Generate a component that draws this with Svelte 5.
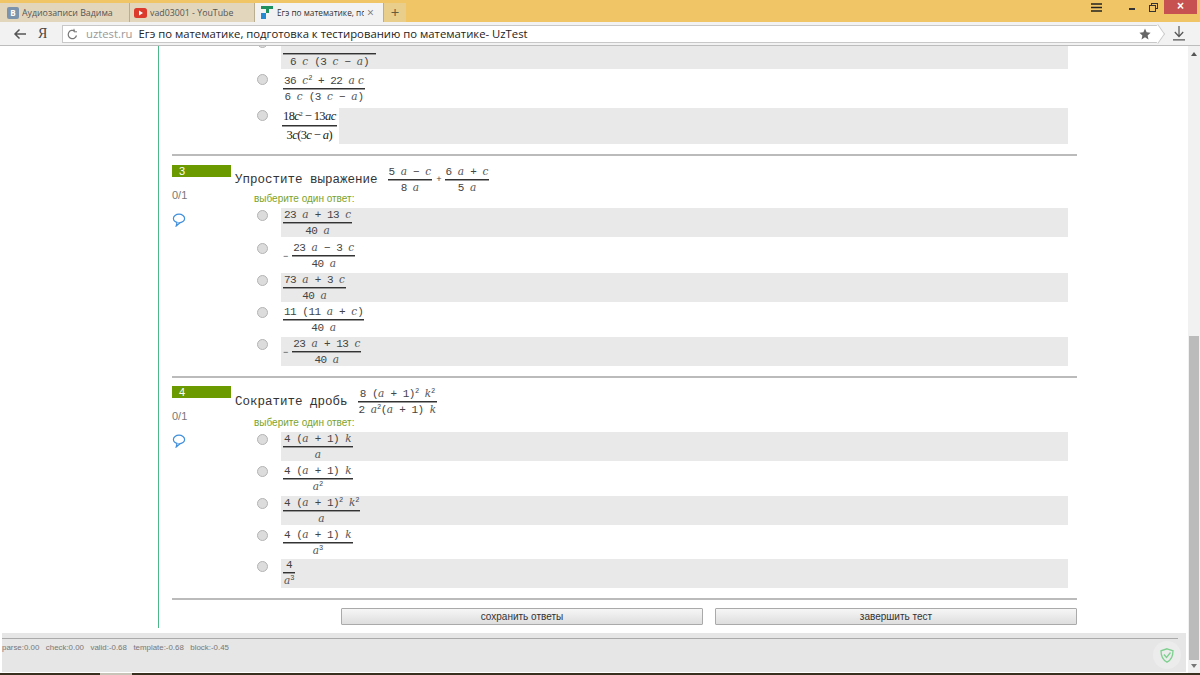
<script>
  const blocks = [
    {
      clipped: true,
      rows: [
        { num: '', den: '6 <i>c</i> (3 <i>c</i> − <i>a</i>)', shade: true, lineWidth: 93, indent: 10 },
        { num: '36 <i>c</i><sup>2</sup> + 22 <i>a c</i>', den: '6 <i>c</i> (3 <i>c</i> − <i>a</i>)', tall: true },
        { num: '18<i>c</i><sup>2</sup> − 13<i>ac</i>', den: '3<i>c</i>(3<i>c</i> − <i>a</i>)', shade: true, serif: true }
      ]
    },
    {
      n: 3,
      title: 'Упростите выражение',
      expr: [
        { num: '5 <i>a</i> − <i>c</i>', den: '8 <i>a</i>' },
        { num: '6 <i>a</i> + <i>c</i>', den: '5 <i>a</i>' }
      ],
      rows: [
        { num: '23 <i>a</i> + 13 <i>c</i>', den: '40 <i>a</i>', shade: true },
        { minus: true, num: '23 <i>a</i> − 3 <i>c</i>', den: '40 <i>a</i>' },
        { num: '73 <i>a</i> + 3 <i>c</i>', den: '40 <i>a</i>', shade: true },
        { num: '11 (11 <i>a</i> + <i>c</i>)', den: '40 <i>a</i>' },
        { minus: true, num: '23 <i>a</i> + 13 <i>c</i>', den: '40 <i>a</i>', shade: true }
      ]
    },
    {
      n: 4,
      title: 'Сократите дробь',
      expr: [
        { num: '8 (<i>a</i> + 1)<sup>2</sup> <i>k</i><sup>2</sup>', den: '2 <i>a</i><sup>2</sup>(<i>a</i> + 1) <i>k</i>' }
      ],
      rows: [
        { num: '4 (<i>a</i> + 1) <i>k</i>', den: '<i>a</i>', shade: true },
        { num: '4 (<i>a</i> + 1) <i>k</i>', den: '<i>a</i><sup>2</sup>' },
        { num: '4 (<i>a</i> + 1)<sup>2</sup> <i>k</i><sup>2</sup>', den: '<i>a</i>', shade: true },
        { num: '4 (<i>a</i> + 1) <i>k</i>', den: '<i>a</i><sup>3</sup>' },
        { num: '4', den: '<i>a</i><sup>3</sup>', shade: true }
      ]
    }
  ];
</script>

{#snippet frac(f)}
  <span class="frac" class:serif={f.serif}>
    <span class="num" style={f.indent ? `padding-left:${f.indent}px` : ''}>{@html f.num}</span>
    <span class="bar" style={f.lineWidth ? `width:${f.lineWidth}px` : ''}></span>
    <span class="den">{@html f.den}</span>
  </span>
{/snippet}

{#snippet options(rows)}
  <div class="options">
    {#each rows as row}
      <div class="option" class:tall={row.tall} class:image={row.serif}>
        <input type="radio" disabled />
        <div class="answer" class:shade={row.shade}>
          <span class="formula" class:paper={row.serif}>
            {#if row.minus}<span class="minus">−</span>{/if}
            {@render frac(row)}
          </span>
        </div>
      </div>
    {/each}
  </div>
{/snippet}

<div class="window">
  <div class="tabbar">
    <div class="tab">
      <span class="vk">В</span>
      <span class="tab-title">Аудиозаписи Вадима</span>
    </div>
    <div class="tab">
      <svg width="13" height="10" viewBox="0 0 13 10">
        <rect width="13" height="10" rx="2.5" fill="#dc3a2c" />
        <path d="M5 2.6v4.8L9 5z" fill="#fff" />
      </svg>
      <span class="tab-title">vad03001 - YouTube</span>
    </div>
    <div class="tab active">
      <svg width="13" height="13" viewBox="0 0 13 13">
        <rect x="0" y="0" width="12" height="3" fill="#1e8f5e" />
        <rect x="5" y="3" width="3" height="4" fill="#1e8f5e" />
        <rect x="0" y="7" width="5" height="6" fill="#2489d0" />
      </svg>
      <span class="tab-title">Егэ по математике, по</span>
      <span class="tab-close">×</span>
    </div>
    <div class="newtab">+</div>
    <div class="winctl">
      <svg class="menu" width="12" height="9" viewBox="0 0 12 9">
        <path d="M0 1h11M0 4.5h11M0 8h11" stroke="#222" stroke-width="1.4" />
      </svg>
      <span class="min"></span>
      <svg class="restore" width="9" height="9" viewBox="0 0 9 9" fill="none" stroke="#333">
        <rect x="2.5" y="0.5" width="6" height="5" />
        <rect x="0.5" y="2.5" width="6" height="6" fill="#f0c566" />
      </svg>
      <span class="close">×</span>
    </div>
  </div>

  <div class="toolbar">
    <svg class="back" width="14" height="12" viewBox="0 0 14 12" fill="none" stroke="#555" stroke-width="1.5">
      <path d="M13 6H2M6.5 1.5 2 6l4.5 4.5" />
    </svg>
    <span class="ya">Я</span>
    <div class="omnibox">
      <svg width="11" height="12" viewBox="0 0 11 12" fill="none" stroke="#777" stroke-width="1.2">
        <path d="M9.5 7.5a4.2 4.2 0 1 1-1.6-4.4" />
        <path d="M7 0.8v3h3" stroke-width="1" />
      </svg>
      <span class="host">uztest.ru</span>
      <span class="page-title">Егэ по математике, подготовка к тестированию по математике- UzTest</span>
      <svg class="star" width="12" height="12" viewBox="0 0 12 12">
        <path d="M6 .6 7.6 4.300l4 .4-3 2.700.9 4L6 9.300 2.500 11.400l.9-4-3-2.700 4-.4z" fill="#666" />
      </svg>
    </div>
    <svg class="download" width="12" height="15" viewBox="0 0 12 15" fill="none" stroke="#555" stroke-width="1.2">
      <path d="M6 0v10M1.800 6 6 10.500 10.200 6M0 13.800h12" />
    </svg>
  </div>

  <div class="viewport">
    <div class="page">
      <main class="test">
        {#each blocks as block}
          <section class="question" class:clipped={block.clipped} class:fourth={block.n === 4}>
            <div class="side">
              {#if block.n}
                <div class="badge">{block.n}</div>
                <div class="score">0/1</div>
                <svg class="comment" width="14" height="14" viewBox="0 0 14 14" fill="none" stroke="#3f8fdc" stroke-width="1.2">
                  <ellipse cx="7" cy="5.500" rx="5.600" ry="4.300" />
                  <path d="M5 9.500 4.200 13 8 9.700" fill="#fff" />
                </svg>
              {/if}
            </div>
            <div class="body">
              {#if block.n}
                <div class="head">
                  <span class="title">{block.title}</span>
                  {#each block.expr as f, j}
                    {#if j > 0}<span class="plus">+</span>{/if}
                    {@render frac(f)}
                  {/each}
                </div>
                <div class="hint">выберите один ответ:</div>
              {/if}
              {@render options(block.rows)}
            </div>
          </section>
          <hr />
        {/each}
        <div class="actions">
          <button>сохранить ответы</button>
          <button>завершить тест</button>
        </div>
      </main>
      <footer class="debug">
        <div class="debug-line"></div>
        <div class="stats">
          <span>parse:0.00</span>
          <span>check:0.00</span>
          <span>valid:-0.68</span>
          <span>template:-0.68</span>
          <span>block:-0.45</span>
        </div>
        <div class="guard">
          <svg width="14" height="15" viewBox="0 0 14 15" fill="none" stroke="#7ed08f" stroke-width="1.300">
            <path d="M7 .8 13 2.800c0 6-1.500 9.200-6 11.400C2.500 12 1 8.800 1 2.800z" />
            <path d="M4 6.500 6.500 9.500 10.500 4.500" />
          </svg>
        </div>
      </footer>
    </div>
    <div class="scrollbar">
      <span class="arrow up"></span>
      <div class="track"></div>
      <div class="thumb"></div>
      <span class="arrow down"></span>
    </div>
  </div>

  <div class="taskbar">
    <span class="task"></span>
  </div>
</div>

<style>
  :global(body) {
    overflow: hidden;
    background: #fff;
  }

  .window {
    width: 1200px;
    height: 675px;
    display: flex;
    flex-direction: column;
    overflow: hidden;
    font-family: "Liberation Sans", Arial, sans-serif;
  }

  /* Browser chrome */
  .tabbar {
    height: 22px;
    flex-shrink: 0;
    display: flex;
    align-items: flex-end;
    background: #f0c566;
    font-family: "Open Sans", "Noto Sans", sans-serif;
    font-size: 8.800px;
  }

  .tab {
    width: 130px;
    height: 19px;
    display: flex;
    align-items: center;
    gap: 3px;
    padding-left: 4px;
    box-sizing: border-box;
    background: #e2d7bd;
    border-right: 1px solid #b9ad92;
    color: #555;
    overflow: hidden;
    white-space: nowrap;
  }

  .tab:nth-child(2) {
    width: 125px;
  }

  .tab.active {
    width: 129px;
    background: #f2f2f2;
    color: #333;
    padding-left: 6px;
    font-size: 8.300px;
  }

  .tab-title {
    flex: 1;
    overflow: hidden;
  }

  .tab-close {
    width: 9px;
    margin-right: 7px;
    line-height: 14px;
    font-size: 12px;
    color: #777;
  }

  .vk {
    width: 12px;
    height: 12px;
    margin-left: 3px;
    background: #7b93ad;
    color: #fff;
    border-radius: 2px;
    font-size: 8px;
    font-weight: 700;
    line-height: 12px;
    text-align: center;
    flex-shrink: 0;
  }

  .newtab {
    width: 22px;
    height: 19px;
    background: #e9cd8a;
    color: #665a3a;
    font-size: 15px;
    line-height: 18px;
    text-align: center;
  }

  .winctl {
    margin-left: auto;
    align-self: flex-start;
    display: flex;
    align-items: center;
    height: 14px;
    padding-right: 3px;
  }

  .menu {
    margin-right: 26px;
    margin-top: 1px;
  }

  .min {
    width: 6px;
    height: 2px;
    background: #333;
    margin-right: 14px;
    margin-top: 3px;
  }

  .restore {
    margin-right: 6px;
  }

  .close {
    width: 33px;
    height: 14px;
    background: #c75050;
    color: #fff;
    font-family: "Liberation Sans", Arial, sans-serif;
    font-size: 12px;
    font-weight: 700;
    line-height: 13px;
    text-align: center;
  }

  .toolbar {
    height: 24px;
    flex-shrink: 0;
    display: flex;
    align-items: center;
    background: #f2f2f2;
    border-bottom: 1px solid #bdbdbd;
    box-sizing: border-box;
  }

  .back {
    margin-left: 13px;
  }

  .ya {
    margin-left: 11px;
    width: 24px;
    font-family: "Liberation Serif", serif;
    font-size: 14px;
    color: #444;
  }

  .omnibox {
    position: relative;
    width: 1097px;
    height: 18px;
    display: flex;
    align-items: center;
    box-sizing: border-box;
    padding-left: 4px;
    background: #fff;
    border: 1px solid #c8c8c8;
    border-right: none;
    font-family: "Open Sans", "Noto Sans", sans-serif;
    font-size: 11.300px;
    white-space: nowrap;
  }

  .omnibox::after {
    content: '';
    position: absolute;
    right: -5px;
    top: 2px;
    width: 11px;
    height: 11px;
    background: #fff;
    border-top: 1px solid #c8c8c8;
    border-right: 1px solid #c8c8c8;
    transform: rotate(45deg) skew(10deg, 10deg);
  }

  .host {
    margin-left: 8px;
    color: #999;
  }

  .page-title {
    margin-left: 6px;
    color: #222;
  }

  .star {
    margin-left: auto;
    margin-right: 8px;
  }

  .download {
    margin-left: 14px;
  }

  /* Page */
  .viewport {
    flex: 1;
    min-height: 0;
    display: flex;
    overflow: hidden;
  }

  .page {
    flex: 1;
    min-width: 0;
    display: flex;
    flex-direction: column;
    overflow: hidden;
  }

  .test {
    width: 920px;
    height: 582px;
    flex-shrink: 0;
    box-sizing: border-box;
    margin-left: 158px;
    padding-left: 13px;
    border-left: 1px solid #4cb88a;
    overflow: hidden;
  }

  .question {
    display: grid;
    grid-template-columns: 59px 1fr;
    column-gap: 4px;
    padding-top: 9px;
  }

  .question.clipped {
    margin-top: -6px;
    padding-top: 0;
  }

  .question.fourth {
    padding-top: 8px;
  }

  .badge {
    height: 12px;
    padding-left: 7px;
    background: #6a9a00;
    color: #fff;
    font-size: 11px;
    line-height: 12px;
  }

  .score {
    margin-top: 12px;
    color: #777;
    font-size: 11px;
    line-height: 13px;
  }

  .comment {
    display: block;
    margin-top: 11px;
  }

  .body {
    min-width: 0;
  }

  .head {
    height: 29px;
    display: flex;
    align-items: center;
  }

  .fourth .head {
    height: 32px;
  }

  .title {
    font-family: "Liberation Mono", monospace;
    font-size: 12.500px;
    color: #333;
    margin-right: 10px;
  }

  .plus {
    font-family: "Liberation Mono", monospace;
    font-size: 9px;
    color: #444;
    margin: 0 3px 0 4px;
  }

  .hint {
    margin-left: 19px;
    color: #7ba32c;
    font-size: 10px;
    line-height: 10px;
  }

  .options {
    margin-top: 4px;
    display: flex;
    flex-direction: column;
    gap: 3.200px;
  }

  .fourth .options {
    gap: 2.800px;
  }

  .clipped .options {
    margin-top: 0;
  }

  .option {
    display: flex;
    align-items: flex-start;
    margin-right: 10px;
  }

  input[type="radio"] {
    appearance: none;
    width: 11px;
    height: 11px;
    margin: 2px 13px 0 22px;
    flex-shrink: 0;
    border-radius: 50%;
    border: 1px solid #b4b4b4;
    box-sizing: border-box;
    background: #dcdcdc;
  }

  .clipped .option:first-child input {
    margin-top: -3px;
  }

  .answer {
    flex: 1;
    height: 29px;
    display: flex;
    align-items: flex-start;
  }

  .tall .answer {
    height: 33px;
    padding-top: 2px;
    box-sizing: border-box;
  }

  .image .answer {
    height: 36px;
  }

  .answer.shade {
    background: #e9e9e9;
  }

  .formula {
    display: inline-flex;
    align-items: center;
    padding-left: 2px;
  }

  .formula.paper {
    padding: 0 2px 0 1px;
    background: #fff;
  }

  .minus {
    font-size: 9px;
    color: #444;
    margin-right: 4px;
  }

  .frac {
    display: inline-flex;
    flex-direction: column;
    align-items: center;
    font-family: "Liberation Mono", monospace;
    font-size: 11px;
    letter-spacing: -0.5px;
    line-height: 12px;
    color: #444;
    white-space: pre;
  }

  .frac :global(i) {
    font-family: "DejaVu Serif", serif;
    font-size: 10.500px;
    letter-spacing: 0;
    color: #555;
  }

  .frac :global(sup) {
    font-size: 7px;
    line-height: 0;
    vertical-align: 4px;
  }

  .num {
    min-height: 12px;
    padding: 0 1px 1px;
    align-self: center;
  }

  .den {
    padding: 0 1px;
    line-height: 13px;
  }

  .bar {
    align-self: stretch;
    height: 1px;
    background: #333;
    border-bottom: 1px solid #999;
  }

  .frac.serif {
    font-family: "Liberation Serif", serif;
    font-size: 12.500px;
    letter-spacing: -0.6px;
    color: #222;
  }

  .frac.serif :global(i) {
    font-family: "Liberation Serif", serif;
    font-size: 12.500px;
    letter-spacing: -0.6px;
    color: #222;
  }

  .frac.serif .num, .frac.serif .den {
    line-height: 17px;
    min-height: 17px;
    padding-bottom: 0;
  }

  hr {
    margin: 10px 0 0;
    width: 905px;
    height: 2px;
    border: none;
    background: #bbb;
  }

  .actions {
    display: flex;
    justify-content: flex-end;
    gap: 12px;
    margin-top: 8px;
    width: 905px;
  }

  button {
    width: 362px;
    height: 17px;
    padding: 0;
    border: 1px solid #aaa;
    border-radius: 1px;
    background: linear-gradient(#f6f6f6, #dedede);
    font-family: "Liberation Sans", Arial, sans-serif;
    font-size: 10px;
    color: #333;
  }

  .debug {
    position: relative;
    margin: 5px 2px 0;
    height: 39px;
    flex-shrink: 0;
    background: #e6e6e6;
    padding-top: 5px;
    box-sizing: border-box;
  }

  .debug-line {
    height: 1px;
    background: #aaa;
    margin-right: 8px;
  }

  .stats {
    display: flex;
    gap: 6.500px;
    margin-top: 4px;
    font-size: 7.900px;
    color: #777;
  }

  .guard {
    position: absolute;
    right: 5px;
    top: 8px;
    width: 28px;
    height: 28px;
    display: flex;
    align-items: center;
    justify-content: center;
    border-radius: 50%;
    background: #ececec;
  }

  .scrollbar {
    width: 12px;
    flex-shrink: 0;
    display: flex;
    flex-direction: column;
    align-items: center;
    background: #f1f1f1;
    padding-bottom: 5px;
    box-sizing: border-box;
  }

  .track {
    flex: 1;
  }

  .thumb {
    width: 10px;
    height: 324px;
    background: #bbb;
  }

  .arrow {
    width: 0;
    height: 0;
    border-left: 3.500px solid transparent;
    border-right: 3.500px solid transparent;
  }

  .arrow.up {
    margin-top: 6px;
    border-bottom: 4px solid #555;
  }

  .arrow.down {
    margin-top: 4px;
    border-top: 4px solid #777;
  }

  .taskbar {
    height: 2px;
    flex-shrink: 0;
    background: #3a3020;
  }

  .task {
    display: block;
    width: 32px;
    height: 2px;
    margin-left: 100px;
    background: #c8c4b8;
  }
</style>
